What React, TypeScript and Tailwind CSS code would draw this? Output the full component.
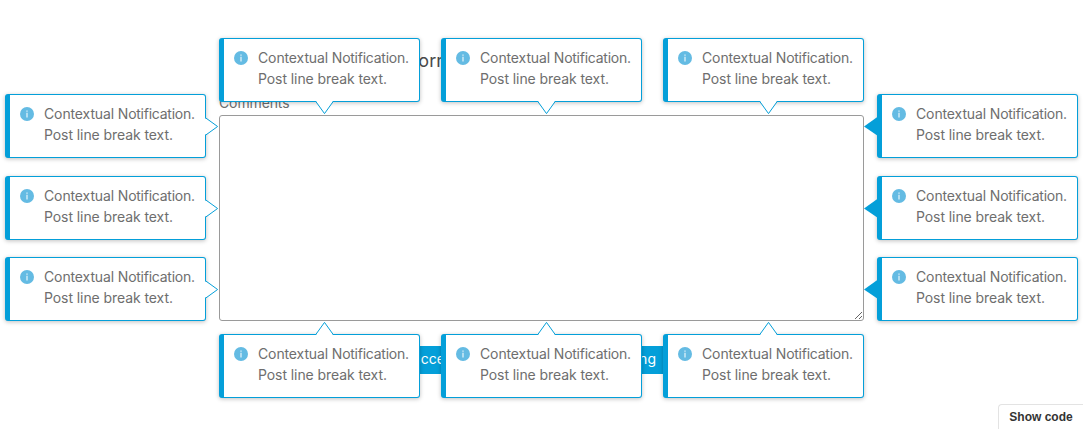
type Side = 'top' | 'bottom' | 'left' | 'right';

const notices: { side: Side; place: string }[] = [
  { side: 'top', place: 'left-[219px] top-[38px]' },
  { side: 'top', place: 'left-[441px] top-[38px]' },
  { side: 'top', place: 'left-[663px] top-[38px]' },
  { side: 'left', place: 'left-[5px] top-[94px]' },
  { side: 'left', place: 'left-[5px] top-[176px]' },
  { side: 'left', place: 'left-[5px] top-[257px]' },
  { side: 'right', place: 'left-[877px] top-[94px]' },
  { side: 'right', place: 'left-[877px] top-[176px]' },
  { side: 'right', place: 'left-[877px] top-[257px]' },
  { side: 'bottom', place: 'left-[219px] top-[334px]' },
  { side: 'bottom', place: 'left-[441px] top-[334px]' },
  { side: 'bottom', place: 'left-[663px] top-[334px]' },
];

function Arrow({ side }: { side: Side }) {
  if (side === 'top') {
    return (
      <svg viewBox="0 0 20 14" className="absolute top-[62px] left-[91px] h-[14px] w-[20px]">
        <path d="M1 0L9.5 12L18 0" fill="white" />
        <path d="M0.8 0.5L9.5 12.6L18.2 0.5" fill="none" stroke="#049fd9" />
      </svg>
    );
  }
  if (side === 'bottom') {
    return (
      <svg viewBox="0 0 20 14" className="absolute -top-[14px] left-[91px] h-[14px] w-[20px]">
        <path d="M1 14L9.5 2L18 14" fill="white" />
        <path d="M0.8 13.5L9.5 1.4L18.2 13.5" fill="none" stroke="#049fd9" />
      </svg>
    );
  }
  if (side === 'left') {
    return (
      <svg viewBox="0 0 15 20" className="absolute top-[21px] left-[194px] h-[20px] w-[15px]">
        <path d="M0 1.5L13.4 10.5L0 19.5Z" fill="white" />
        <path d="M1.3 1.6L13.6 10.5L1.3 19.4" fill="none" stroke="#049fd9" />
      </svg>
    );
  }
  return (
    <svg viewBox="0 0 14 20" className="absolute top-[21px] -left-[18px] h-[20px] w-[14px]">
      <path d="M14 0.5L0 10.5L14 20Z" fill="#049fd9" />
    </svg>
  );
}

function Notice({ side, place }: { side: Side; place: string }) {
  return (
    <div
      className={`absolute flex h-16 w-[201px] rounded-[3px] border border-l-[5px] border-[#049fd9] bg-white pt-2 pl-[10px] shadow-[0_1px_4px_rgba(0,0,0,0.25)] ${place}`}
    >
      <svg viewBox="0 0 14 14" className="mt-1 mr-[10px] size-[14px] shrink-0">
        <circle cx="7" cy="7" r="7" fill="#64bbe3" />
        <path d="M7 5.8V10.4M7 3.4V4.8" stroke="#cdeaf6" strokeWidth="1.5" />
      </svg>
      <p className="text-[14px] leading-[21px] tracking-[-0.08px] whitespace-nowrap text-[#6e6e6e]">
        <span className="tracking-[-0.12px]">Contextual </span>
        <span className="tracking-[-0.25px]">Notification.</span>
        <br />
        Post line break text.
      </p>
      <Arrow side={side} />
    </div>
  );
}

export default function App() {
  return (
    <div className="relative h-[429px] w-[1083px] overflow-hidden bg-white font-['Inter',sans-serif]">
      <main className="mx-auto flex w-[645px] flex-col pt-[48px]">
        <h2 className="h-[46px] pl-[101px] text-[18px] leading-[26px] text-[#4a4a4a]">Feedback Form</h2>
        <label htmlFor="comments" className="h-[21px] text-[14px] leading-[18px] tracking-[-0.12px] text-[#6e6e6e]">
          Comments
        </label>
        <textarea
          id="comments"
          className="h-[206px] w-full resize rounded-[3px] border border-[#9a9a9a] bg-white outline-none"
        />
        <div className="mt-[25px] flex h-7 justify-center text-[14px] leading-[26px] text-white">
          <button className="w-[101px] bg-[#049fd9] pr-[18px] pb-0.5">Success</button>
          <button className="w-[101px] bg-[#049fd9] pb-0.5">Info</button>
          <button className="w-[101px] bg-[#049fd9] pr-7 pb-0.5">Warning</button>
        </div>
      </main>
      {notices.map((notice) => (
        <Notice key={notice.place} {...notice} />
      ))}
      <button className="absolute right-0 bottom-0 h-[25px] w-[85px] rounded-tl-[4px] border-t border-l border-[#e3e3e3] bg-white font-['Liberation_Sans',sans-serif] text-[12px] font-bold text-[#333]">
        Show code
      </button>
    </div>
  );
}
